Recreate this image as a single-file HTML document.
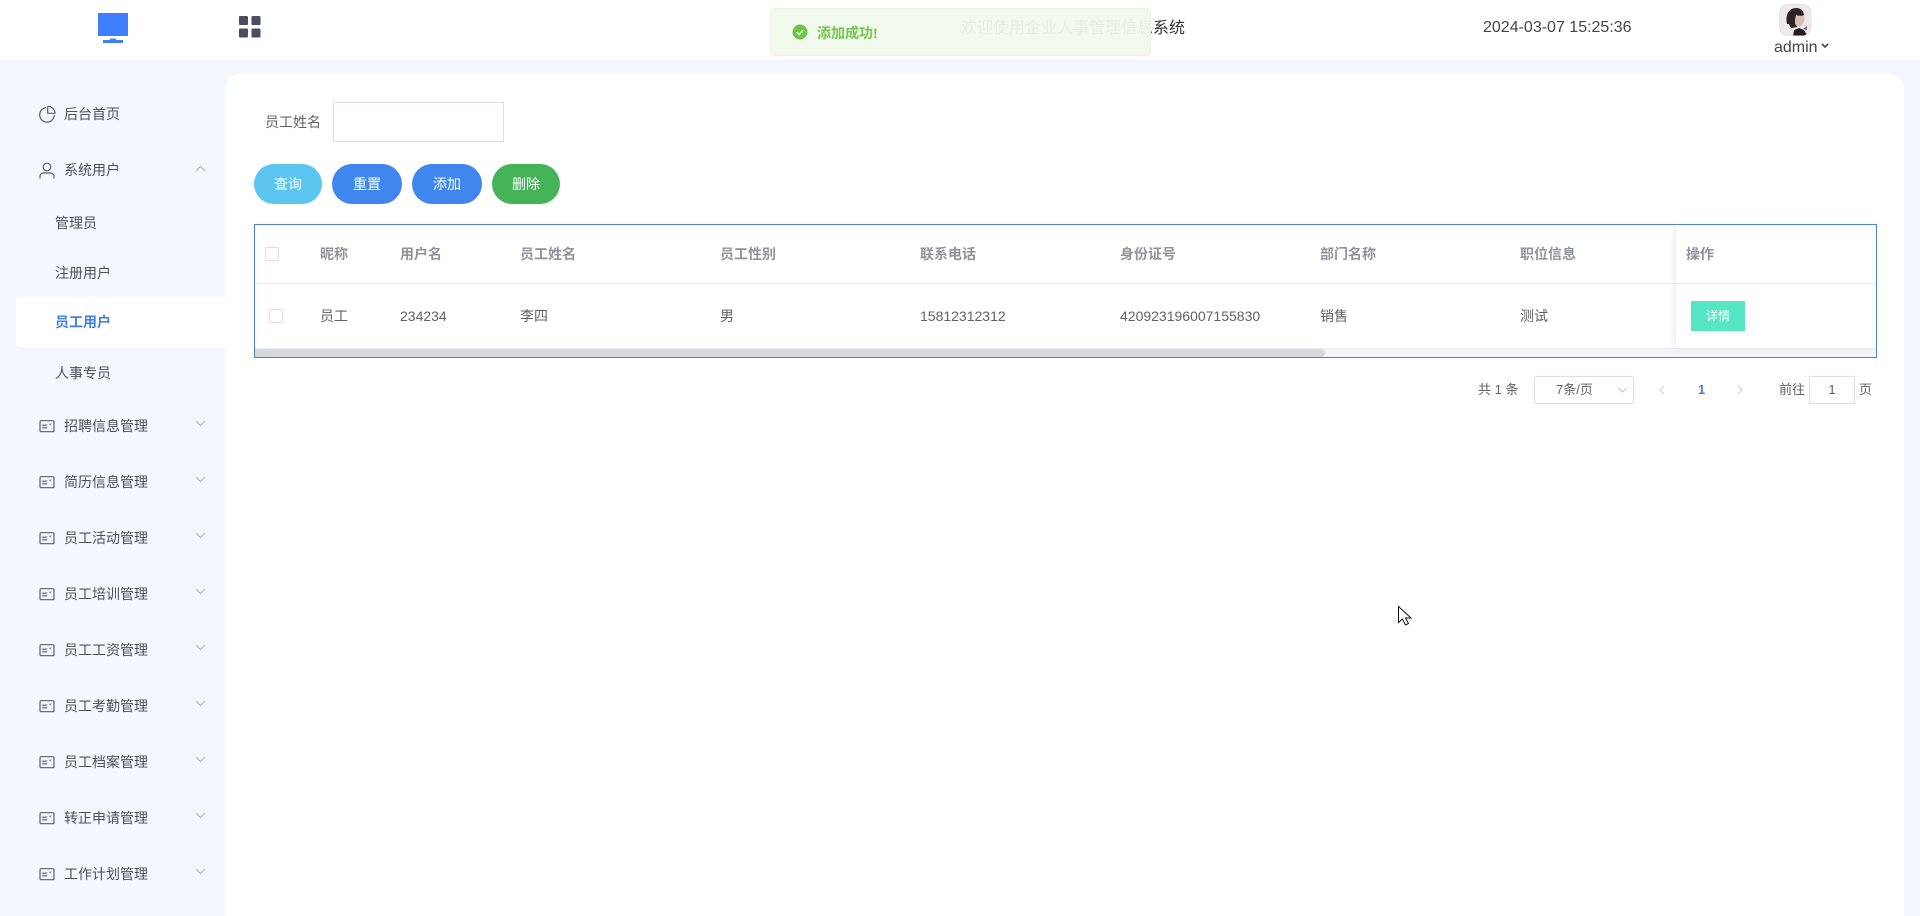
<!DOCTYPE html>
<html lang="zh">
<head>
<meta charset="utf-8">
<title>员工用户</title>
<style>
*{box-sizing:border-box}
html,body{margin:0;padding:0;width:1920px;height:916px;overflow:hidden;background:#f4f7fd;font-family:"Liberation Sans","Noto Sans CJK SC",sans-serif;font-size:14px;color:#606266}
.a,.t{position:absolute}
.t{line-height:20px;height:20px;white-space:nowrap}
.m{color:#4e5058;left:64px}
.s{color:#4e5058;left:55px}
svg{position:absolute;display:block}
.btn{position:absolute;top:164px;height:40px;border-radius:20px;color:#fff;text-align:center;line-height:40px}
.th{top:244px;font-weight:700;color:#909399}
.td{top:306px;color:#606266}
.cb{position:absolute;width:14px;height:14px;border:1px solid #dcdfe6;border-radius:2px;background:#fff}
</style>
</head>
<body>
<svg width="0" height="0" style="left:0;top:0">
<symbol id="card" viewBox="0 0 16 13"><g fill="none" stroke="#5a5d66" stroke-width="1.200"><rect x="1" y=".7" width="14" height="11" rx="1"/><path d="M3.200 5.200h5M3.200 7.800h5M10.300 4.200h1.800"/></g></symbol>
<symbol id="chev" viewBox="0 0 11 7"><path d="M1 1l4.500 4.500L10 1" fill="none" stroke="#b0b2ba" stroke-width="1"/></symbol>
</svg>
<div class="a" style="left:0;top:0;width:1920px;height:59px;background:#fff"></div>

<!-- logo -->
<svg style="left:97px;top:12px" width="32" height="33" viewBox="0 0 32 33">
<rect x="1" y="1" width="30" height="23" fill="#3f7fff"/>
<path d="M13 26.500h6v1.500h-6z" fill="#3f7fff"/>
<rect x="6" y="28" width="20" height="3" fill="#3f7fff"/>
</svg>
<!-- grid -->
<svg style="left:239px;top:16px" width="22" height="22" viewBox="0 0 22 22" fill="#4a4e60">
<rect x="0" y="0" width="9" height="9" rx="1"/><rect x="12.500" y="0" width="9" height="9" rx="1"/>
<rect x="0" y="12.500" width="9" height="9" rx="1"/><rect x="12.500" y="12.500" width="9" height="9" rx="1"/>
</svg>

<div class="t" style="left:961px;top:19px;font-size:16px;line-height:20px;color:#333">欢迎使用企业人事管理信息系统</div>
<div class="t" style="left:1483px;top:18px;font-size:16px;color:#444">2024-03-07 15:25:36</div>

<!-- avatar -->
<svg style="left:1779px;top:4px" width="33" height="32" viewBox="0 0 33 32">
<defs><clipPath id="av"><rect x="1" y="1" width="30.500" height="30.500" rx="8"/></clipPath></defs>
<rect x="0" y="0" width="32.500" height="32" rx="9" fill="#e9e1e1"/>
<g clip-path="url(#av)">
<rect x="1" y="1" width="31" height="31" fill="#efeae8"/>
<path d="M8 20C6 11 10 4 17 4c5 0 8 3 8 8l-4 5-3 6-5 1c-1 0-2-1-3-4z" fill="#2c2426"/>
<path d="M17 11c3 1 6 1 8 0 1 4 0 9-3 11-3 1-5 0-6-2 0-3 0-6 1-9z" fill="#d9bcb4"/>
<path d="M14 33l1-7 5-2 5 2 4 7z" fill="#221d1f"/>
<path d="M24 25l4-3v4z" fill="#6d6590"/>
</g>
</svg>
<div class="t" style="left:1774px;top:38px;font-size:16px;color:#444">admin</div>
<svg style="left:1821px;top:43px" width="8" height="6" viewBox="0 0 8 6"><path d="M1 1l3 3 3-3" fill="none" stroke="#444" stroke-width="1.600"/></svg>

<!-- sidebar -->
<div class="a" style="left:16px;top:297px;width:209px;height:50px;background:#fff;border-radius:4px 0 0 4px"></div>

<svg style="left:39px;top:105px" width="18" height="18" viewBox="0 0 18 18" fill="none" stroke="#5a5d66" stroke-width="1.200"><path d="M7 2.600A7.300 7.300 0 1 0 15.300 10"/><path d="M8.700 1.300V8.300H16A7.300 7.300 0 0 0 8.700 1.300"/></svg>
<div class="t m" style="top:104px">后台首页</div>

<svg style="left:39px;top:162px" width="16" height="17" viewBox="0 0 16 17" fill="none" stroke="#5a5d66" stroke-width="1.200"><circle cx="8" cy="5" r="3.800"/><path d="M1 16.500v-2c0-2 1.500-3.500 3.500-3.500h7c2 0 3.500 1.500 3.500 3.500v2"/></svg>
<div class="t m" style="top:160px">系统用户</div>
<svg style="left:195px;top:165px" width="11" height="7" viewBox="0 0 11 7"><path d="M1 6l4.500-4.500L10 6" fill="none" stroke="#a8aab2" stroke-width="1"/></svg>

<div class="t s" style="top:213px">管理员</div>
<div class="t s" style="top:263px">注册用户</div>
<div class="t" style="left:55px;top:312px;color:#4080e8;font-weight:700">员工用户</div>
<div class="t s" style="top:363px">人事专员</div>

<!-- repeated menu -->
<svg style="left:39px;top:420px" width="16" height="13"><use href="#card"/></svg>
<div class="t m" style="top:416px">招聘信息管理</div>
<svg style="left:195px;top:420px" width="11" height="7"><use href="#chev"/></svg>

<svg style="left:39px;top:476px" width="16" height="13"><use href="#card"/></svg>
<div class="t m" style="top:472px">简历信息管理</div>
<svg style="left:195px;top:476px" width="11" height="7"><use href="#chev"/></svg>

<svg style="left:39px;top:532px" width="16" height="13"><use href="#card"/></svg>
<div class="t m" style="top:528px">员工活动管理</div>
<svg style="left:195px;top:532px" width="11" height="7"><use href="#chev"/></svg>

<svg style="left:39px;top:588px" width="16" height="13"><use href="#card"/></svg>
<div class="t m" style="top:584px">员工培训管理</div>
<svg style="left:195px;top:588px" width="11" height="7"><use href="#chev"/></svg>

<svg style="left:39px;top:644px" width="16" height="13"><use href="#card"/></svg>
<div class="t m" style="top:640px">员工工资管理</div>
<svg style="left:195px;top:644px" width="11" height="7"><use href="#chev"/></svg>

<svg style="left:39px;top:700px" width="16" height="13"><use href="#card"/></svg>
<div class="t m" style="top:696px">员工考勤管理</div>
<svg style="left:195px;top:700px" width="11" height="7"><use href="#chev"/></svg>

<svg style="left:39px;top:756px" width="16" height="13"><use href="#card"/></svg>
<div class="t m" style="top:752px">员工档案管理</div>
<svg style="left:195px;top:756px" width="11" height="7"><use href="#chev"/></svg>

<svg style="left:39px;top:812px" width="16" height="13"><use href="#card"/></svg>
<div class="t m" style="top:808px">转正申请管理</div>
<svg style="left:195px;top:812px" width="11" height="7"><use href="#chev"/></svg>

<svg style="left:39px;top:868px" width="16" height="13"><use href="#card"/></svg>
<div class="t m" style="top:864px">工作计划管理</div>
<svg style="left:195px;top:868px" width="11" height="7"><use href="#chev"/></svg>

<!-- content card -->
<div class="a" style="left:225px;top:74px;width:1679px;height:842px;background:#fff;border-radius:16px 16px 0 0"></div>

<div class="t" style="left:265px;top:112px;color:#606266">员工姓名</div>
<div class="a" style="left:333px;top:102px;width:171px;height:40px;border:1px solid #dcdfe6;background:#fff"></div>

<div class="btn" style="left:254px;width:68px;background:#5bc5f0">查询</div>
<div class="btn" style="left:332px;width:70px;background:#3f87ee">重置</div>
<div class="btn" style="left:412px;width:70px;background:#3f87ee">添加</div>
<div class="btn" style="left:492px;width:68px;background:#46b258">删除</div>

<!-- table -->
<div class="a" style="left:255px;top:283px;width:1621px;height:1px;background:#ebeef5"></div>
<div class="a" style="left:255px;top:348px;width:1621px;height:1px;background:#ebeef5"></div>
<div class="a" style="left:255px;top:349px;width:1621px;height:8px;background:#f5f5f7"></div>
<div class="a" style="left:255px;top:349px;width:1070px;height:8px;background:#d6d8de;border-radius:0 4px 4px 0"></div>

<div class="cb" style="left:265px;top:247px"></div>
<div class="t th" style="left:320px">昵称</div>
<div class="t th" style="left:400px">用户名</div>
<div class="t th" style="left:520px">员工姓名</div>
<div class="t th" style="left:720px">员工性别</div>
<div class="t th" style="left:920px">联系电话</div>
<div class="t th" style="left:1120px">身份证号</div>
<div class="t th" style="left:1320px">部门名称</div>
<div class="t th" style="left:1520px">职位信息</div>

<div class="cb" style="left:269px;top:309px"></div>
<div class="t td" style="left:320px">员工</div>
<div class="t td" style="left:400px">234234</div>
<div class="t td" style="left:520px">李四</div>
<div class="t td" style="left:720px">男</div>
<div class="t td" style="left:920px">15812312312</div>
<div class="t td" style="left:1120px">420923196007155830</div>
<div class="t td" style="left:1320px">销售</div>
<div class="t td" style="left:1520px">测试</div>

<!-- fixed col -->
<div class="a" style="left:1676px;top:225px;width:200px;height:123px;background:#fff;box-shadow:-2px 0 6px rgba(0,0,0,.08)"></div>
<div class="a" style="left:1676px;top:283px;width:200px;height:1px;background:#ebeef5"></div>
<div class="t th" style="left:1686px">操作</div>
<div class="a" style="left:1691px;top:301px;width:54px;height:30px;background:#55e6c4;color:#fff;font-size:12px;line-height:30px;text-align:center">详情</div>

<div class="a" style="left:254px;top:224px;width:1623px;height:134px;border:1px solid #4d82cc"></div>

<!-- pagination -->
<div class="t" style="left:1478px;top:380px;font-size:13px">共 1 条</div>
<div class="a" style="left:1534px;top:376px;width:100px;height:28px;border:1px solid #dcdfe6;border-radius:3px;background:#fff"></div>
<div class="t" style="left:1556px;top:380px;font-size:13px">7条/页</div>
<svg style="left:1618px;top:387px" width="9" height="6" viewBox="0 0 9 6"><path d="M.5 1l4 4 4-4" fill="none" stroke="#c0c4cc" stroke-width="1"/></svg>
<svg style="left:1659px;top:385px" width="6" height="10" viewBox="0 0 6 10"><path d="M5 1L1 5l4 4" fill="none" stroke="#d0d3da" stroke-width="1.200"/></svg>
<div class="t" style="left:1698px;top:380px;font-size:13px;font-weight:700;color:#4080ee">1</div>
<svg style="left:1737px;top:385px" width="6" height="10" viewBox="0 0 6 10"><path d="M1 1l4 4-4 4" fill="none" stroke="#d0d3da" stroke-width="1.200"/></svg>
<div class="t" style="left:1779px;top:380px;font-size:13px">前往</div>
<div class="a" style="left:1809px;top:376px;width:46px;height:28px;border:1px solid #dcdfe6;background:#fff;text-align:center;line-height:26px;font-size:13px">1</div>
<div class="t" style="left:1859px;top:380px;font-size:13px">页</div>

<!-- message -->
<div class="a" style="left:770px;top:8px;width:381px;height:48px;background:#f0f9eb;border:1px solid #e9f5e1;border-radius:4px;opacity:.95">
<svg style="left:21px;top:15px" width="16" height="16" viewBox="0 0 16 16"><circle cx="8" cy="8" r="7.500" fill="#67c23a"/><path d="M4.800 8.200l2.300 2.200 4-4" fill="none" stroke="#fff" stroke-width="1.500"/></svg>
<div class="t" style="left:46px;top:14px;color:#6cc443;font-weight:700">添加成功!</div>
</div>

<!-- cursor -->
<svg style="left:1397px;top:605px" width="15" height="22" viewBox="0 0 15 22"><path d="M1.500 1.500v16l4-3.500 3 6 3-1.500-3-5.500h5.500z" fill="#fff" stroke="#111" stroke-width="1"/></svg>
</body>
</html>
